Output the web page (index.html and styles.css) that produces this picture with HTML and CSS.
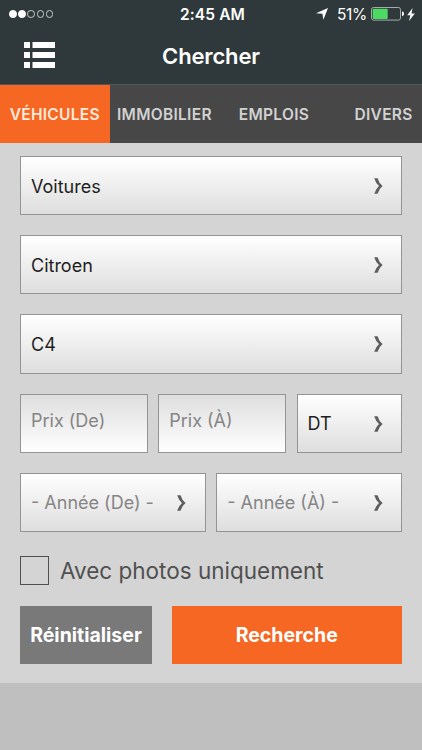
FILE: index.html
```html
<!DOCTYPE html>
<html lang="fr">
  <head>
    <meta charset="UTF-8" />
    <meta name="viewport" content="width=device-width, initial-scale=1.0" />
    <title>Chercher</title>

    <link rel="stylesheet" href="styles.css">
  </head>
  <body>
    <svg width="0" height="0" class="defs">
      <symbol id="chevron" viewBox="0 0 9 16">
        <path d="M0.2 0.2h3.4q1.2 4.8 5 7.8q-3.8 3-5 7.8H0.2Q1.7 11 5 8Q1.7 5 0.2 0.2z" />
      </symbol>
    </svg>

    <header>
      <div class="status">
        <div class="signal">
          <i class="full"></i><i class="full"></i><i></i><i></i><i></i>
        </div>
        <div class="time">2:45 AM</div>
        <div class="power">
          <svg class="location" width="12" height="12" viewBox="0 0 12 12">
            <path d="M12 0L7.4 11.8L6.4 5.8L0 5.3z" />
          </svg>
          <span class="percent">51%</span>
          <svg width="33" height="14" viewBox="0 0 33 14">
            <rect class="case" x="0.5" y="0.5" width="29" height="12.6" rx="2" />
            <rect class="level" x="1.7" y="1.7" width="15" height="10.2" rx="0.8" />
            <path d="M31 4.6q2 0 2 2.2t-2 2.2z" />
          </svg>
          <svg class="bolt" width="8" height="13" viewBox="0 0 8 13">
            <path d="M5.6 0L0.2 7.2H3.4L2 13L7.8 5.4H4.5z" />
          </svg>
        </div>
      </div>
      <div class="bar">
        <svg class="menu" width="31" height="26" viewBox="0 0 31 26">
          <path d="M0 0h6v6H0zM8.5 0H31v6H8.5zM0 10h6v6H0zM8.5 10H31v6H8.5zM0 20h6v6H0zM8.5 20H31v6H8.5z" />
        </svg>
        <h1>Chercher</h1>
      </div>
    </header>

    <nav class="tabs">
      <a class="tab active">VÉHICULES</a>
      <a class="tab">IMMOBILIER</a>
      <a class="tab">EMPLOIS</a>
      <a class="tab">DIVERS</a>
    </nav>

    <main>
      <div class="row">
        <div class="field"><span>Voitures</span><svg class="arrow"><use href="#chevron" /></svg></div>
      </div>
      <div class="row">
        <div class="field"><span>Citroen</span><svg class="arrow"><use href="#chevron" /></svg></div>
      </div>
      <div class="row">
        <div class="field"><span>C4</span><svg class="arrow"><use href="#chevron" /></svg></div>
      </div>
      <div class="row">
        <div class="field input"><span>Prix (De)</span></div>
        <div class="field input"><span>Prix (À)</span></div>
        <div class="field currency"><span>DT</span><svg class="arrow"><use href="#chevron" /></svg></div>
      </div>
      <div class="row">
        <div class="field year"><span>- Année (De) -</span><svg class="arrow"><use href="#chevron" /></svg></div>
        <div class="field year"><span>- Année (À) -</span><svg class="arrow"><use href="#chevron" /></svg></div>
      </div>
      <div class="photos">
        <div class="checkbox"></div>
        <span>Avec photos uniquement</span>
      </div>
      <div class="buttons">
        <div class="btn reset">Réinitialiser</div>
        <div class="btn search">Recherche</div>
      </div>
    </main>
  </body>
</html>
```
FILE: styles.css
```css
* {
  box-sizing: border-box;
}

body {
  margin: 0;
  height: 750px;
  overflow: hidden;
  background-color: #bfbfbf;
  font-family: Inter, 'Liberation Sans', sans-serif;
}

.defs {
  display: block;
}

header {
  height: 84px;
  color: white;
  background-color: #2f393b;
}

header svg {
  fill: white;
}

.status {
  height: 28px;
  display: grid;
  grid-template-columns: 1fr auto 1fr;
  align-items: center;
  padding: 0 7px 0 9px;
}

.signal {
  display: flex;
  gap: 1.5px;
}

.signal i {
  width: 7.7px;
  height: 7.7px;
  border: 1px solid #c9cccc;
  border-radius: 50%;
}

.signal .full {
  background-color: white;
  border-color: white;
}

.time {
  padding-left: 1px;
  font-size: 15.5px;
  font-weight: 600;
  letter-spacing: 0.1px;
}

.power {
  display: flex;
  justify-content: flex-end;
  align-items: center;
}

.percent {
  margin: 0 4px 0 9px;
  font-size: 15.5px;
  letter-spacing: -0.3px;
}

.power .case {
  fill: none;
  stroke: #a6abab;
}

.power .level {
  fill: #4cd964;
}

.bolt {
  margin-left: 3px;
}

.bar {
  height: 56px;
  display: grid;
  grid-template-columns: 1fr auto 1fr;
  align-items: center;
  padding: 0 23.5px;
}

.menu {
  margin-top: -2px;
}

h1 {
  margin: 0;
  font-size: 22px;
  font-weight: 600;
  letter-spacing: -0.15px;
}

.tabs {
  height: 59px;
  display: flex;
  overflow: hidden;
  border-top: 1px solid #505956;
  background-color: #474747;
}

.tab {
  flex: 0 0 109.6px;
  display: flex;
  justify-content: center;
  align-items: center;
  color: #d2d2d2;
  font-size: 15.5px;
  font-weight: 600;
  letter-spacing: 0.3px;
}

.tab.active {
  color: #ffe9dc;
  background-color: #f56722;
}

main {
  height: 540px;
  padding: 13px 20px 0;
  background-color: #d4d4d4;
}

.row {
  display: flex;
  gap: 10.5px;
  margin-bottom: 20px;
}

.field {
  flex: 1;
  height: 59.2px;
  display: flex;
  justify-content: space-between;
  align-items: center;
  padding: 1px 18.5px 0 10px;
  border: 1px solid #949494;
  background: linear-gradient(#ffffff, #dedede);
  color: #1e1e1e;
  font-size: 18px;
  white-space: nowrap;
}

.field.input {
  padding: 0 10px 5px;
  color: #858585;
  background: linear-gradient(#dedede, #ffffff);
}

.field.currency {
  flex: 0 0 105.5px;
}

.field.year {
  color: #858585;
}

.arrow {
  width: 9px;
  height: 16px;
  fill: #5e5e5e;
}

.photos {
  display: flex;
  align-items: center;
  gap: 11px;
  margin-top: 24px;
  color: #505050;
  font-size: 22.5px;
  white-space: nowrap;
}

.checkbox {
  width: 29px;
  height: 29px;
  border: 1px solid #505050;
}

.buttons {
  display: flex;
  gap: 19.5px;
  margin-top: 21px;
}

.btn {
  height: 58px;
  display: flex;
  justify-content: center;
  align-items: center;
  padding-top: 1px;
  color: white;
  font-size: 19.5px;
  font-weight: 700;
}

.reset {
  width: 132px;
  background-color: #797979;
}

.search {
  flex: 1;
  background-color: #f56722;
}
```
